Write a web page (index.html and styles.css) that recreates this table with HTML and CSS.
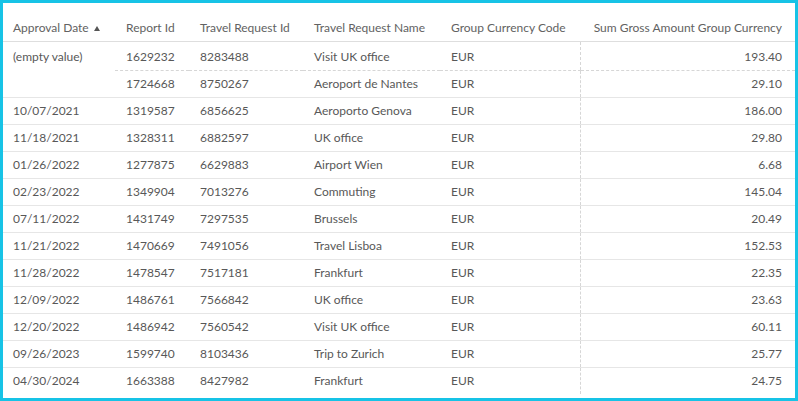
FILE: index.html
```html
<!DOCTYPE html>
<html>
<head>
<meta charset="utf-8">
<link rel="stylesheet" href="styles.css">
</head>
<body>
<div class="frame">
  <table class="grid">
    <colgroup>
      <col class="c1"><col class="c2"><col class="c3"><col class="c4"><col class="c5"><col class="c6">
    </colgroup>
    <thead>
      <tr>
        <th class="first">Approval Date<span class="sort"></span></th>
        <th>Report Id</th>
        <th>Travel Request Id</th>
        <th>Travel Request Name</th>
        <th>Group Currency Code</th>
        <th class="num">Sum Gross Amount Group Currency</th>
      </tr>
    </thead>
    <tbody>
      <tr class="grouped">
        <td class="first" rowspan="2">(empty value)</td>
        <td>1629232</td><td>8283488</td><td>Visit UK office</td><td>EUR</td><td class="num">193.40</td>
      </tr>
      <tr>
        <td>1724668</td><td>8750267</td><td>Aeroport de Nantes</td><td>EUR</td><td class="num">29.10</td>
      </tr>
      <tr><td class="first">10/07/2021</td><td>1319587</td><td>6856625</td><td>Aeroporto Genova</td><td>EUR</td><td class="num">186.00</td></tr>
      <tr><td class="first">11/18/2021</td><td>1328311</td><td>6882597</td><td>UK office</td><td>EUR</td><td class="num">29.80</td></tr>
      <tr><td class="first">01/26/2022</td><td>1277875</td><td>6629883</td><td>Airport Wien</td><td>EUR</td><td class="num">6.68</td></tr>
      <tr><td class="first">02/23/2022</td><td>1349904</td><td>7013276</td><td>Commuting</td><td>EUR</td><td class="num">145.04</td></tr>
      <tr><td class="first">07/11/2022</td><td>1431749</td><td>7297535</td><td>Brussels</td><td>EUR</td><td class="num">20.49</td></tr>
      <tr><td class="first">11/21/2022</td><td>1470669</td><td>7491056</td><td>Travel Lisboa</td><td>EUR</td><td class="num">152.53</td></tr>
      <tr><td class="first">11/28/2022</td><td>1478547</td><td>7517181</td><td>Frankfurt</td><td>EUR</td><td class="num">22.35</td></tr>
      <tr><td class="first">12/09/2022</td><td>1486761</td><td>7566842</td><td>UK office</td><td>EUR</td><td class="num">23.63</td></tr>
      <tr><td class="first">12/20/2022</td><td>1486942</td><td>7560542</td><td>Visit UK office</td><td>EUR</td><td class="num">60.11</td></tr>
      <tr><td class="first">09/26/2023</td><td>1599740</td><td>8103436</td><td>Trip to Zurich</td><td>EUR</td><td class="num">25.77</td></tr>
      <tr class="last"><td class="first">04/30/2024</td><td>1663388</td><td>8427982</td><td>Frankfurt</td><td>EUR</td><td class="num">24.75</td></tr>
    </tbody>
  </table>
</div>
</body>
</html>
```

FILE: styles.css
```css
html, body {
  margin: 0;
  padding: 0;
  background: #ffffff;
}
.frame {
  box-sizing: border-box;
  width: 798px;
  height: 401px;
  border: 3px solid #17c3e6;
  overflow: hidden;
  background: #ffffff;
}
.grid {
  border-collapse: collapse;
  table-layout: fixed;
  width: 792px;
  font-family: Lato, "Open Sans", sans-serif;
  font-size: 12px;
  color: #585858;
}
.c1 { width: 112px; }
.c2 { width: 74px; }
.c3 { width: 114px; }
.c4 { width: 137px; }
.c5 { width: 140px; }
.c6 { width: 215px; }

.grid th {
  font-weight: normal;
  text-align: left;
  color: #626262;
  height: 26px;
  line-height: 26px;
  padding: 12px 0 0 11px;
  border-bottom: 1px solid #dedede;
  white-space: nowrap;
}
.grid td {
  height: 26px;
  line-height: 26px;
  padding: 0 0 0 11px;
  vertical-align: top;
  border-bottom: 1px solid #e6e6e6;
  white-space: nowrap;
}
.grid tr.grouped td {
  padding-top: 2px;
  border-bottom: 1px dashed #d6d6d6;
}
.grid tr.grouped td.first {
  border-bottom: 1px solid #e6e6e6;
}
.grid .first {
  padding-left: 10px;
}
.grid .num {
  text-align: right;
  padding-right: 13px;
  padding-left: 0;
}
.grid td.num {
  border-left: 1px dashed #d6d6d6;
}
.grid tr.last td {
  border-bottom: none;
}
.sort {
  display: inline-block;
  width: 0;
  height: 0;
  margin-left: 5px;
  border-left: 3px solid transparent;
  border-right: 3px solid transparent;
  border-bottom: 5px solid #555555;
  vertical-align: 1px;
}
```
